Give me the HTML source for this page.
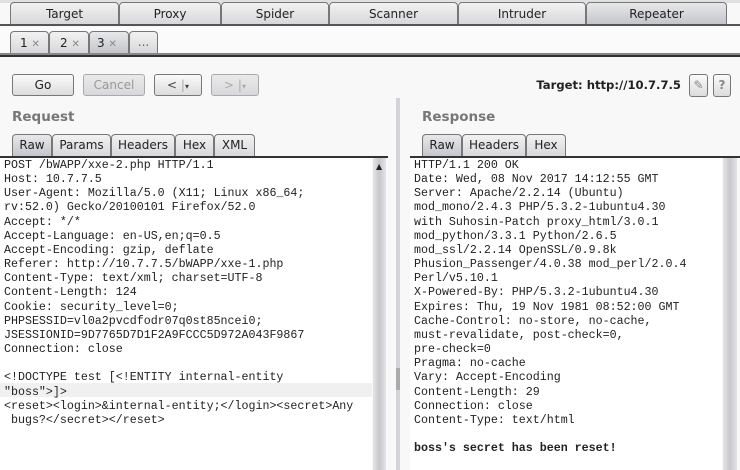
<!DOCTYPE html>
<html><head><meta charset="utf-8"><style>
*{margin:0;padding:0;box-sizing:border-box}
body{width:740px;height:470px;background:#f8f8f8;font-family:"DejaVu Sans","Liberation Sans",sans-serif;font-size:12px;color:#222;position:relative;overflow:hidden}
.a{position:absolute}
.tab{position:absolute;border:1px solid #777;border-bottom:none;border-radius:4px 4px 0 0;background:linear-gradient(#f2f2f2,#d8d8dc);text-align:center;font-size:12px;color:#222}
.sel{background:linear-gradient(#e8e8ea,#c4c6cc)}
.btn{position:absolute;height:22px;border:1px solid #777;border-radius:3px;background:linear-gradient(#fafafa,#dcdcdc);text-align:center;line-height:20px;font-size:12px}
.dis{border-color:#aaa;color:#999;background:linear-gradient(#eaeaea,#d8d8dc)}
.line{position:absolute;height:2px;background:#333}
pre{position:absolute;font-family:"Liberation Mono","DejaVu Sans Mono",monospace;font-size:11.65px;line-height:14.15px;color:#222}
.pane{position:absolute;background:#fff}
.sb{position:absolute;background:linear-gradient(90deg,#e4e4e8,#c8c8cc,#e4e4e8)}
</style></head><body>
<div class="a" style="left:0;top:0;width:740px;height:3px;background:#e0e0e0"></div>
<div class="tab" style="left:10px;top:2px;width:109px;height:22px;line-height:22px">Target</div>
<div class="tab" style="left:119px;top:2px;width:102px;height:22px;line-height:22px">Proxy</div>
<div class="tab" style="left:221px;top:2px;width:108px;height:22px;line-height:22px">Spider</div>
<div class="tab" style="left:329px;top:2px;width:129px;height:22px;line-height:22px">Scanner</div>
<div class="tab" style="left:458px;top:2px;width:128px;height:22px;line-height:22px">Intruder</div>
<div class="tab sel" style="left:586px;top:2px;width:141px;height:22px;line-height:22px">Repeater</div>
<div class="line" style="left:0;top:24px;width:740px;background:#555"></div>
<div class="a" style="left:0;top:27px;width:740px;height:26px;background:#fbfbfb"></div>
<div class="tab" style="left:10px;top:31px;width:39px;height:22px;line-height:22px;text-align:left;padding-left:9px">1 <span style="color:#888;font-size:10px">✕</span></div>
<div class="tab" style="left:49px;top:31px;width:40px;height:22px;line-height:22px;text-align:left;padding-left:10px">2 <span style="color:#888;font-size:10px">✕</span></div>
<div class="tab sel" style="left:89px;top:31px;width:40px;height:22px;line-height:22px;text-align:left;padding-left:7px">3 <span style="color:#888;font-size:10px">✕</span></div>
<div class="tab" style="left:129px;top:31px;width:29px;height:22px;line-height:20px;color:#666">...</div>
<div class="line" style="left:0;top:53px;width:740px;background:#888"></div>
<div class="line" style="left:0;top:55px;width:740px;background:#333"></div>
<div class="btn" style="left:12px;top:74px;width:62px">Go</div>
<div class="btn dis" style="left:83px;top:74px;width:62px">Cancel</div>
<div class="btn" style="left:154px;top:74px;width:48px;color:#444">&lt; <span style="color:#aaa">|</span><span style="font-size:8px">▾</span></div>
<div class="btn dis" style="left:211px;top:74px;width:48px;color:#aaa">&gt; <span>|</span><span style="font-size:8px">▾</span></div>
<div class="a" style="left:480px;width:201px;text-align:right;top:78px;font-weight:bold;font-size:11.6px;white-space:nowrap">Target: http://10.7.7.5</div>
<div class="btn" style="left:689px;top:74px;width:19px;height:23px;color:#888">✎</div>
<div class="btn" style="left:713px;top:74px;width:18px;height:23px;color:#888;font-weight:bold">?</div>
<div class="a" style="left:12px;top:109px;font-weight:bold;font-size:13.5px;color:#777">Request</div>
<div class="a" style="left:422px;top:109px;font-weight:bold;font-size:13.5px;color:#777">Response</div>
<div class="tab sel" style="left:12px;top:134px;width:40px;height:22px;line-height:21px">Raw</div>
<div class="tab" style="left:52px;top:134px;width:59px;height:22px;line-height:21px">Params</div>
<div class="tab" style="left:111px;top:134px;width:64px;height:22px;line-height:21px">Headers</div>
<div class="tab" style="left:175px;top:134px;width:39px;height:22px;line-height:21px">Hex</div>
<div class="tab" style="left:214px;top:134px;width:41px;height:22px;line-height:21px">XML</div>
<div class="tab sel" style="left:422px;top:134px;width:40px;height:22px;line-height:21px">Raw</div>
<div class="tab" style="left:462px;top:134px;width:64px;height:22px;line-height:21px">Headers</div>
<div class="tab" style="left:526px;top:134px;width:40px;height:22px;line-height:21px">Hex</div>
<div class="line" style="left:0;top:156px;width:388px"></div>
<div class="line" style="left:410px;top:156px;width:330px"></div>
<div class="pane" style="left:0;top:158px;width:372px;height:312px"></div>
<div class="a" style="left:0;top:383px;width:372px;height:14px;background:#f0f0f0"></div>
<div class="sb" style="left:373px;top:158px;width:13px;height:312px"></div>
<div class="a" style="left:376px;top:162px;font-size:8px">▲</div>
<div class="a" style="left:396px;top:98px;width:4px;height:372px;background:#d4d4d8"></div>
<div class="a" style="left:396px;top:368px;width:4px;height:22px;background:#aaa"></div>
<div class="pane" style="left:410px;top:158px;width:312px;height:312px"></div>
<div class="sb" style="left:723px;top:158px;width:14px;height:312px"></div>
<pre style="left:4px;top:159px">POST /bWAPP/xxe-2.php HTTP/1.1
Host: 10.7.7.5
User-Agent: Mozilla/5.0 (X11; Linux x86_64;
rv:52.0) Gecko/20100101 Firefox/52.0
Accept: */*
Accept-Language: en-US,en;q=0.5
Accept-Encoding: gzip, deflate
Referer: http://10.7.7.5/bWAPP/xxe-1.php
Content-Type: text/xml; charset=UTF-8
Content-Length: 124
Cookie: security_level=0;
PHPSESSID=vl0a2pvcdfodr07q0st85ncei0;
JSESSIONID=9D7765D7D1F2A9FCCC5D972A043F9867
Connection: close

&lt;!DOCTYPE test [&lt;!ENTITY internal-entity
"boss"&gt;]&gt;
&lt;reset&gt;&lt;login&gt;&amp;internal-entity;&lt;/login&gt;&lt;secret&gt;Any
 bugs?&lt;/secret&gt;&lt;/reset&gt;</pre>
<pre style="left:414px;top:159px">HTTP/1.1 200 OK
Date: Wed, 08 Nov 2017 14:12:55 GMT
Server: Apache/2.2.14 (Ubuntu)
mod_mono/2.4.3 PHP/5.3.2-1ubuntu4.30
with Suhosin-Patch proxy_html/3.0.1
mod_python/3.3.1 Python/2.6.5
mod_ssl/2.2.14 OpenSSL/0.9.8k
Phusion_Passenger/4.0.38 mod_perl/2.0.4
Perl/v5.10.1
X-Powered-By: PHP/5.3.2-1ubuntu4.30
Expires: Thu, 19 Nov 1981 08:52:00 GMT
Cache-Control: no-store, no-cache,
must-revalidate, post-check=0,
pre-check=0
Pragma: no-cache
Vary: Accept-Encoding
Content-Length: 29
Connection: close
Content-Type: text/html

<b>boss's secret has been reset!</b></pre>
</body></html>
